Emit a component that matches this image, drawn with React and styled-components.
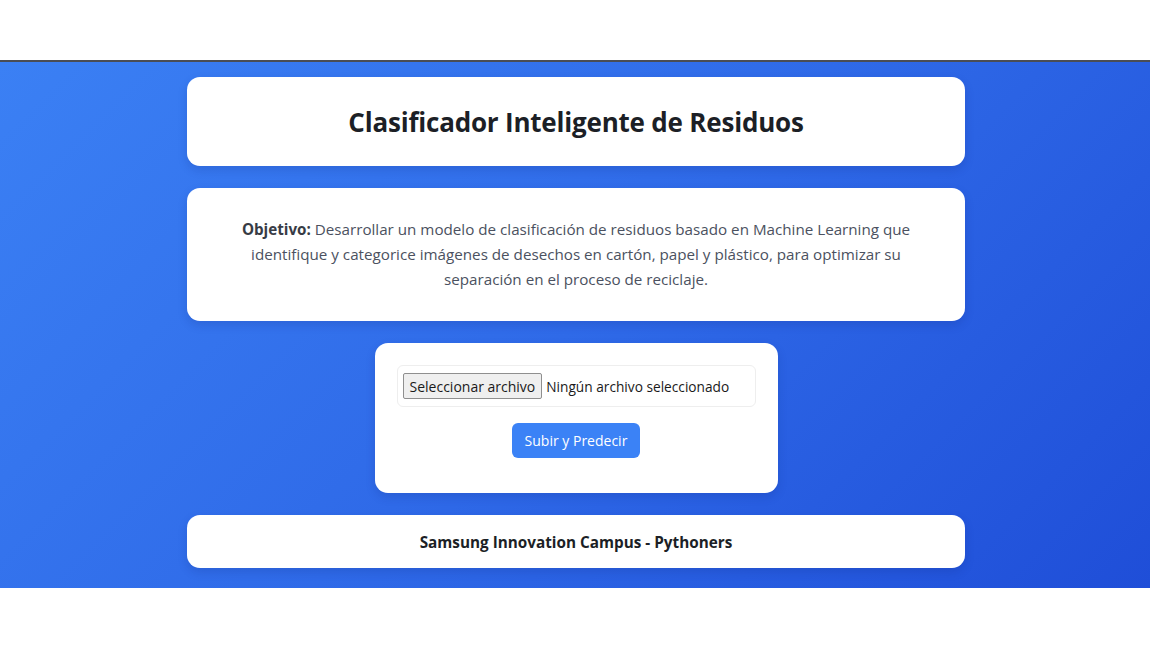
import styled, { createGlobalStyle } from "styled-components";

const GlobalStyle = createGlobalStyle`
    body {
        margin: 0;
        background: #ffffff;
        font-family: "Open Sans", "Noto Sans", sans-serif;
    }
`;

const Page = styled.div`
    width: 1152px;
    height: 648px;
    padding-top: 60px;
    box-sizing: border-box;
    background: #ffffff;
`;

const Stage = styled.main`
    width: 1150px;
    height: 528px;
    box-sizing: border-box;
    border-top: 2px solid #4a4d55;
    background: linear-gradient(135deg, #3b80f4 0%, #2f6ae8 50%, #1f4ed8 100%);
    display: flex;
    flex-direction: column;
    align-items: center;
    gap: 22px;
    padding-top: 15px;
    padding-left: 2px;
`;

const Card = styled.section`
    width: ${(p) => p.$width || "778px"};
    height: ${(p) => p.$height || "auto"};
    box-sizing: border-box;
    background: #ffffff;
    border-radius: 13px;
    box-shadow: 0 4px 10px rgba(15, 40, 120, 0.18);
    padding: ${(p) => p.$padding || "0"};
    display: flex;
    flex-direction: column;
    align-items: center;
    justify-content: ${(p) => (p.$top ? "flex-start" : "center")};
`;

const Title = styled.h1`
    margin: 0;
    font-size: 26px;
    font-weight: 700;
    color: #1c1f26;
    letter-spacing: -0.2px;
`;

const Objective = styled.p`
    margin: 0;
    max-width: 690px;
    text-align: center;
    font-size: 15.2px;
    line-height: 25px;
    color: #4b5160;

    strong {
        color: #373b45;
        font-weight: 700;
    }
`;

const FileBox = styled.div`
    width: 359px;
    height: 42px;
    box-sizing: border-box;
    border: 1px solid #eeeeee;
    border-radius: 6px;
    display: flex;
    align-items: center;
    gap: 4px;
    padding-left: 5px;
`;

const FileButton = styled.span`
    display: inline-flex;
    align-items: center;
    height: 26px;
    box-sizing: border-box;
    padding: 0 6px;
    background: #efefef;
    border: 1px solid #8f8f8f;
    border-radius: 2px;
    font-size: 14px;
    color: #1a1a1a;
`;

const FileLabel = styled.span`
    font-size: 13.7px;
    color: #1a1a1a;
`;

const Submit = styled.button`
    margin-top: 16px;
    width: 128px;
    height: 35px;
    border: none;
    border-radius: 6px;
    background: #3b82f6;
    color: #ffffff;
    font-family: inherit;
    font-size: 14px;
`;

const Footer = styled.p`
    margin: 0;
    font-size: 15.3px;
    font-weight: 700;
    color: #1c1f26;
`;

const App = () => {
    return (
        <Page>
            <GlobalStyle />
            <Stage>
                <Card $height="89px">
                    <Title>Clasificador Inteligente de Residuos</Title>
                </Card>
                <Card $height="133px">
                    <Objective>
                        <strong>Objetivo:</strong> Desarrollar un modelo de clasificación de residuos basado en Machine Learning que identifique y categorice imágenes de desechos en cartón, papel y plástico, para optimizar su separación en el proceso de reciclaje.
                    </Objective>
                </Card>
                <Card $width="403px" $height="150px" $top $padding="22px 0 0">
                    <FileBox>
                        <FileButton>Seleccionar archivo</FileButton>
                        <FileLabel>Ningún archivo seleccionado</FileLabel>
                    </FileBox>
                    <Submit>Subir y Predecir</Submit>
                </Card>
                <Card $height="53px">
                    <Footer>Samsung Innovation Campus - Pythoners</Footer>
                </Card>
            </Stage>
        </Page>
    );
};

export default App;
